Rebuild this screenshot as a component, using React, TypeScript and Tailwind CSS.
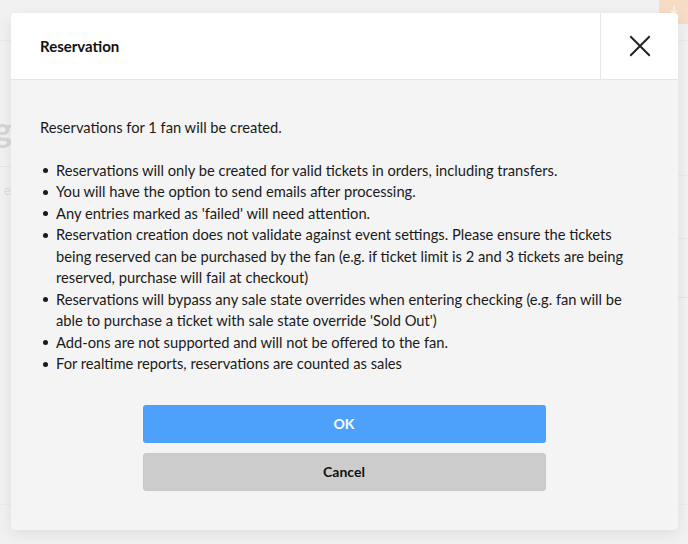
import React from "react";

const bullets = [
  "Reservations will only be created for valid tickets in orders, including transfers.",
  "You will have the option to send emails after processing.",
  "Any entries marked as 'failed' will need attention.",
  "Reservation creation does not validate against event settings. Please ensure the tickets being reserved can be purchased by the fan (e.g. if ticket limit is 2 and 3 tickets are being reserved, purchase will fail at checkout)",
  "Reservations will bypass any sale state overrides when entering checking (e.g. fan will be able to purchase a ticket with sale state override 'Sold Out')",
  "Add-ons are not supported and will not be offered to the fan.",
  "For realtime reports, reservations are counted as sales",
];

export default function App() {
  return (
    <div
      className="relative w-[688px] h-[544px] overflow-hidden bg-[#f1f1f1]"
      style={{ fontFamily: "Lato, 'Open Sans', sans-serif" }}
    >
      {/* faint page content behind the overlay */}
      <div className="absolute left-0 top-[40px] w-[688px] h-[1px] bg-[#e9e9e9]" />
      <div className="absolute left-[-6px] top-[112px] text-[34px] font-bold text-[#d6d6d6] leading-none">g</div>
      <div className="absolute left-0 top-[166px] w-[10px] h-[1px] bg-[#e6e6e6]" />
      <div className="absolute left-[4px] top-[184px] text-[13px] text-[#dedede] leading-none">e</div>
      <div className="absolute right-0 top-0 w-[29px] h-[24px] bg-[#f6dcc4] rounded-bl-[3px] flex items-center justify-center">
        <svg width="14" height="14" viewBox="0 0 14 14" fill="none" stroke="#fbf1e8" strokeWidth="1.6">
          <path d="M7 1v7M4 5.5 7 8.5 10 5.5M2 12h10" />
        </svg>
      </div>
      <div className="absolute right-0 top-[175px] w-[10px] h-[1px] bg-[#e9e9e9]" />
      <div className="absolute right-0 top-[238px] w-[10px] h-[1px] bg-[#e9e9e9]" />
      <div className="absolute right-0 top-[297px] w-[10px] h-[1px] bg-[#e3e3e3]" />
      <div className="absolute left-0 top-[504px] w-[688px] h-[1px] bg-[#ebebeb]" />

      {/* modal */}
      <div className="relative pt-[13px] pl-[11px]">
        <div className="w-[667px] h-[517px] rounded-[4px] bg-[#f4f4f4] shadow-[0_4px_14px_rgba(0,0,0,0.08)] overflow-hidden flex flex-col">
          <div className="h-[67px] bg-white border-b border-[#e6e6e6] flex">
            <div className="flex-1 flex items-center pl-[29px] text-[15px] font-bold text-[#111]">
              Reservation
            </div>
            <div className="w-[78px] border-l border-[#e6e6e6] flex items-center justify-center">
              <svg width="22" height="22" viewBox="0 0 22 22" fill="none" stroke="#222" strokeWidth="2" strokeLinecap="square">
                <path d="M2 2 20 20M20 2 2 20" />
              </svg>
            </div>
          </div>
          <div className="flex-1 pl-[29px] pr-[30px] pt-[37px] text-[14.7px] leading-[21.5px] text-[#1a1a1a]">
            <p>Reservations for 1 fan will be created.</p>
            <ul className="mt-[21px] flex flex-col">
              {bullets.map((b, i) => (
                <li key={i} className="flex">
                  <span className="w-[16px] shrink-0 flex justify-start pt-[8.5px] pl-[2.5px]">
                    <span className="block w-[5px] h-[5px] rounded-full bg-[#1a1a1a]" />
                  </span>
                  <span>{b}</span>
                </li>
              ))}
            </ul>
            <div className="mt-[30px] flex flex-col items-center gap-[10px]">
              <button className="w-[403px] h-[38px] rounded-[3px] bg-[#4da1fb] text-white text-[14px] font-bold">
                OK
              </button>
              <button className="w-[403px] h-[38px] rounded-[3px] bg-[#cccccc] border border-[#c8c8c8] text-[#111] text-[14px] font-bold">
                Cancel
              </button>
            </div>
          </div>
        </div>
      </div>
    </div>
  );
}
